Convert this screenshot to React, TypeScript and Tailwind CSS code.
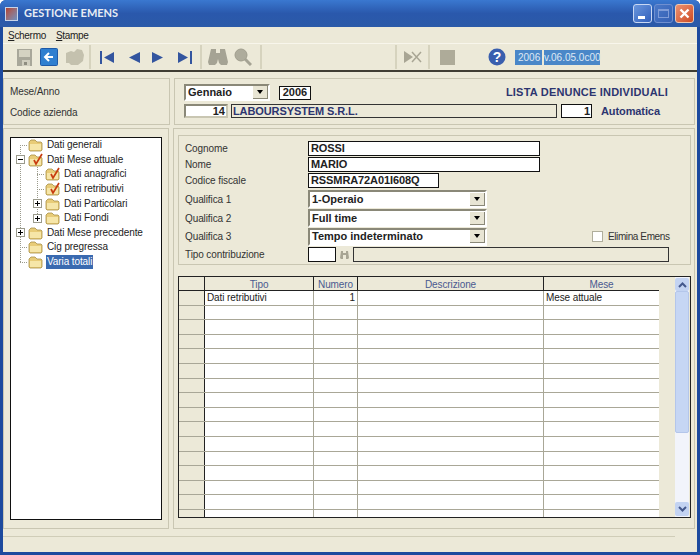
const FONT = "font-['Liberation_Sans',Arial,sans-serif]"

const columns = [
  { name: "Tipo", w: "w-[109px]" },
  { name: "Numero", w: "w-[44px]" },
  { name: "Descrizione", w: "w-[186px]" },
  { name: "Mese", w: "w-[115px]" },
]

const rows = Array.from({ length: 16 }, (_, i) => i)

function Separator({ className = "" }: { className?: string }) {
  return <div className={`h-[24px] w-[2px] shrink-0 bg-[#d6d3be] ${className}`} />
}

function TitleButtons() {
  return (
    <div className="flex items-center gap-[2px] pr-[1px]">
      <div className="relative h-[19px] w-[19px] rounded-[3px] border border-[#c8d8f4] bg-gradient-to-br from-[#6a96dc] to-[#3260bc]">
        <div className="absolute bottom-[3px] left-[4px] h-[3px] w-[7px] bg-white" />
      </div>
      <div className="flex h-[19px] w-[19px] items-center justify-center rounded-[3px] border border-[#6f8fd0] bg-gradient-to-br from-[#4a78c8] to-[#3560b4]">
        <div className="h-[9px] w-[11px] border border-t-2 border-[#7f9cd8]" />
      </div>
      <div className="flex h-[19px] w-[19px] items-center justify-center rounded-[3px] border border-[#f0c8b0] bg-gradient-to-br from-[#ec9070] to-[#cc4a20]">
        <svg width="11" height="11" viewBox="0 0 11 11">
          <path d="M1.500 1.500 9.500 9.500M9.500 1.500 1.500 9.500" stroke="#fff" strokeWidth="2.400" />
        </svg>
      </div>
    </div>
  )
}

function Toolbar() {
  return (
    <div className="flex h-[28px] items-center border-b-2 border-[#3f3d33] bg-[#ece9d8] pl-[11px]">
      <svg width="20" height="19" viewBox="0 0 20 19" className="shrink-0">
        <path d="M3 1h15v17H3z" fill="#a8a79a" />
        <path d="M5 2h11v7H5z" fill="#d4d2c2" />
        <path d="M8 12h8v6H8z" fill="#d0cebf" />
        <path d="M10 14h3v3h-3z" fill="#8e8d80" />
      </svg>
      <svg width="18" height="18" viewBox="0 0 18 18" className="ml-[6px] shrink-0">
        <rect width="17" height="17" x="0.500" y="0.500" rx="1" fill="#2f7fd0" stroke="#1f5aa8" />
        <path d="M13 9H6M9 5 5 9l4 4" stroke="#fff" strokeWidth="2" fill="none" />
      </svg>
      <svg width="20" height="18" viewBox="0 0 20 18" className="ml-[7px] shrink-0">
        <path d="M1 5 6 3l3 1 3-3 5 1 2 5-1 6-5 4H6l-2-2H1z" fill="#c4c1ae" />
      </svg>
      <Separator className="ml-[4px]" />
      <svg width="15" height="13" viewBox="0 0 15 13" className="ml-[9px] shrink-0">
        <path d="M0 0h2v13H0z" fill="#33559f" />
        <path d="M14 1v11L4 6.500z" fill="#33559f" />
      </svg>
      <svg width="11" height="11" viewBox="0 0 11 11" className="ml-[14px] shrink-0">
        <path d="M11 0v11L0 5.500z" fill="#33559f" />
      </svg>
      <svg width="11" height="11" viewBox="0 0 11 11" className="ml-[12px] shrink-0">
        <path d="M0 0v11l11-5.500z" fill="#33559f" />
      </svg>
      <svg width="15" height="13" viewBox="0 0 15 13" className="ml-[14px] shrink-0">
        <path d="M13 0h2v13h-2z" fill="#33559f" />
        <path d="M1 1v11l10-5.500z" fill="#33559f" />
      </svg>
      <Separator className="ml-[8px]" />
      <svg width="20" height="18" viewBox="0 0 20 18" className="ml-[6px] shrink-0">
        <path d="M3 1h5v4h4V1h5l3 13-1 3h-6l-2-2-1-4H10l-1 4-2 2H1l-1-3z" fill="#a5a394" />
      </svg>
      <svg width="18" height="18" viewBox="0 0 18 18" className="ml-[6px] shrink-0">
        <circle cx="7" cy="7" r="6" fill="#aeac9c" stroke="#a09e8e" />
        <path d="M11 11l6 6" stroke="#a5a394" strokeWidth="3" />
      </svg>
      <Separator className="ml-[8px]" />
      <Separator className="ml-[133px]" />
      <svg width="18" height="14" viewBox="0 0 18 14" className="ml-[7px] shrink-0">
        <path d="M0 1v12l9-6z" fill="#a8a594" />
        <path d="M8 2l9 10M17 2 8 12" stroke="#a8a594" strokeWidth="1.500" />
      </svg>
      <Separator className="ml-[6px]" />
      <div className="ml-[10px] h-[15px] w-[15px] shrink-0 bg-[#aeab99]" />
      <svg width="18" height="18" viewBox="0 0 18 18" className="ml-[33px] shrink-0">
        <circle cx="9" cy="9" r="8.500" fill="#3a5fae" />
        <text x="9" y="14" textAnchor="middle" fontSize="14" fontWeight="700" fill="#fff" fontFamily="Liberation Sans">?</text>
      </svg>
      <div className="ml-[9px] flex h-[15px] gap-[2px] text-[10px] leading-[15px] text-[#dfe8f4]">
        <span className="w-[27px] bg-[#4a87c8] pl-[3px]">2006</span>
        <span className="w-[56px] whitespace-nowrap bg-[#4a87c8]">v.06.05.0c00</span>
      </div>
    </div>
  )
}

function Folder({ check = false }: { check?: boolean }) {
  return (
    <svg width="16" height="14" viewBox="0 0 16 14" className="shrink-0">
      <path d="M1 4 3 2h4l2 2h4l1 1v7l-1 1H2l-1-1z" fill="#e8cc78" stroke="#a89048" strokeWidth="0.800" />
      <path d="M2 6h11v6H2z" fill="#f6e6a8" />
      {check && <path d="M6 7l2 4 6-10" stroke="#c83c10" strokeWidth="1.700" fill="none" />}
    </svg>
  )
}

function Expander({ sign }: { sign: "+" | "-" }) {
  return (
    <div className="relative h-[9px] w-[9px] shrink-0 border border-[#9a9a8c] bg-white">
      <div className="absolute left-[1px] top-[3px] h-[1px] w-[5px] bg-black" />
      {sign === "+" && <div className="absolute left-[3px] top-[1px] h-[5px] w-[1px] bg-black" />}
    </div>
  )
}

function TreeRow({ label, depth, check, sign, selected }: { label: string; depth: 0 | 1; check?: boolean; sign?: "+" | "-"; selected?: boolean }) {
  return (
    <div className={`relative flex h-[14.600px] items-center ${depth === 1 ? "pl-[22px]" : "pl-[5px]"}`}>
      <div className="flex w-[11px] shrink-0 items-center">
        {sign ? <Expander sign={sign} /> : <div className="ml-[4px] h-0 w-[7px] border-t border-dotted border-[#9a9a8c]" />}
      </div>
      <div className="ml-[1px]">
        <Folder check={check} />
      </div>
      <span className={`ml-[2px] px-[1px] leading-[14px] tracking-[-0.1px] ${selected ? "bg-[#3a6ab0] text-white" : "text-[#222]"}`}>{label}</span>
    </div>
  )
}

function Combo({ value, w, h }: { value: string; w: string; h: string }) {
  return (
    <div className={`flex items-center justify-between border-2 border-b-white border-r-white border-l-[#8a8878] border-t-[#8a8878] bg-white pl-[2px] ${w} ${h}`}>
      <span className="text-[11px] font-bold text-[#222]">{value}</span>
      <div className="flex h-[13px] w-[15px] items-center justify-center border-b border-r border-[#8a8878] bg-[#e8e5d4]">
        <div className="h-0 w-0 border-x-[3.500px] border-t-[4px] border-x-transparent border-t-black" />
      </div>
    </div>
  )
}

function TextBox({ value, w }: { value: string; w: string }) {
  return (
    <div className={`flex h-[15px] items-center border border-[#111] bg-white pl-[2px] text-[11px] font-bold leading-none tracking-[-0.1px] text-[#222] ${w}`}>
      {value}
    </div>
  )
}

function FormLabel({ children }: { children: string }) {
  return <span className="w-[123px] shrink-0 tracking-[-0.1px] text-[#333]">{children}</span>
}

export default function App() {
  return (
    <div className={`flex h-[555px] w-[700px] flex-col overflow-hidden rounded-t-[6px] bg-[#1d4a9e] text-[10px] ${FONT}`}>
      <div className="flex h-[27px] items-center justify-between bg-gradient-to-b from-[#3a78d0] via-[#2a58ac] to-[#2b5aa8] pl-[5px] pr-[5px]">
        <div className="flex items-center gap-[6px]">
          <div className="h-[14px] w-[13px] border border-[#c8d4e8] bg-gradient-to-br from-[#b04030] to-[#6a90c0]" />
          <span className="font-['Lato',sans-serif] text-[11px] font-bold text-[#e8edf4]">GESTIONE EMENS</span>
        </div>
        <TitleButtons />
      </div>

      <div className="mx-[3px] mb-[3px] flex flex-1 flex-col bg-[#ece9d8]">
        <div className="flex h-[17px] items-center gap-[10px] border-b border-[#f8f6ec] pl-[5px] tracking-[-0.3px] text-[#222]">
          <span>
            <span className="underline">S</span>chermo
          </span>
          <span>
            <span className="underline">S</span>tampe
          </span>
        </div>
        <Toolbar />

        <div className="mr-[2px] mt-[6px] flex h-[47px] gap-[4px]">
          <div className="flex w-[167px] flex-col justify-center gap-[6px] border border-[#c9c6b2] pl-[6px] tracking-[-0.1px] text-[#333]">
            <span>Mese/Anno</span>
            <span>Codice azienda</span>
          </div>
          <div className="flex flex-1 flex-col gap-[2px] border border-[#c9c6b2] pl-[9px] pt-[5px]">
            <div className="flex items-center">
              <Combo value="Gennaio" w="w-[86px]" h="h-[17px]" />
              <div className="ml-[9px] flex h-[14px] w-[32px] items-center justify-center border border-[#111] bg-white text-[11px] font-bold text-[#222]">2006</div>
              <span className="ml-auto mr-[26px] text-[11px] font-bold tracking-[0.2px] text-[#2c3570]">LISTA DENUNCE INDIVIDUALI</span>
            </div>
            <div className="flex items-center">
              <div className="flex h-[14px] w-[44px] items-center justify-end border-2 border-b-[#c9c6b2] border-r-[#c9c6b2] border-l-[#8a8878] border-t-[#8a8878] bg-white pr-[1px] text-[11px] font-bold text-[#222]">14</div>
              <div className="ml-[3px] flex h-[14px] w-[326px] items-center border border-[#333] pl-[1px] text-[11px] font-bold tracking-[-0.1px] text-[#2c3570]">LABOURSYSTEM S.R.L.</div>
              <div className="ml-[4px] flex h-[14px] w-[31px] items-center justify-end border border-[#111] bg-white pr-[1px] text-[11px] font-bold text-[#222]">1</div>
              <span className="ml-[9px] text-[11px] font-bold tracking-[-0.1px] text-[#2c3570]">Automatica</span>
            </div>
          </div>
        </div>

        <div className="mr-[2px] mt-[3px] flex h-[401px] gap-[4px]">
          <div className="w-[167px] border border-[#c9c6b2] px-[6px] pb-[8px] pt-[8px]">
            <div className="relative h-full border border-[#111] bg-white">
              <div className="absolute left-[9px] top-[7px] h-[117px] border-l border-dotted border-[#9a9a8c]" />
              <div className="absolute left-[26px] top-[22px] h-[58px] border-l border-dotted border-[#9a9a8c]" />
              <TreeRow depth={0} label="Dati generali" />
              <TreeRow depth={0} label="Dati Mese attuale" check sign="-" />
              <TreeRow depth={1} label="Dati anagrafici" check />
              <TreeRow depth={1} label="Dati retributivi" check />
              <TreeRow depth={1} label="Dati Particolari" sign="+" />
              <TreeRow depth={1} label="Dati Fondi" sign="+" />
              <TreeRow depth={0} label="Dati Mese precedente" sign="+" />
              <TreeRow depth={0} label="Cig pregressa" />
              <TreeRow depth={0} label="Varia totali" selected />
            </div>
          </div>

          <div className="flex flex-1 flex-col border border-[#c9c6b2] pl-[4px] pr-[3px] pt-[6px]">
            <div className="h-[130px] border border-[#c9c6b2] pl-[6px] pt-[4px] text-[#333]">
              <div className="flex h-[16px] items-center">
                <FormLabel>Cognome</FormLabel>
                <TextBox value="ROSSI" w="w-[232px]" />
              </div>
              <div className="flex h-[16px] items-center">
                <FormLabel>Nome</FormLabel>
                <TextBox value="MARIO" w="w-[232px]" />
              </div>
              <div className="flex h-[17px] items-center">
                <FormLabel>Codice fiscale</FormLabel>
                <TextBox value="RSSMRA72A01I608Q" w="w-[131px]" />
              </div>
              <div className="flex h-[20px] items-center">
                <FormLabel>Qualifica 1</FormLabel>
                <Combo value="1-Operaio" w="w-[179px]" h="h-[18px]" />
              </div>
              <div className="flex h-[18px] items-center">
                <FormLabel>Qualifica 2</FormLabel>
                <Combo value="Full time" w="w-[179px]" h="h-[18px]" />
              </div>
              <div className="flex h-[19px] items-center">
                <FormLabel>Qualifica 3</FormLabel>
                <Combo value="Tempo indeterminato" w="w-[179px]" h="h-[18px]" />
                <div className="ml-[105px] h-[11px] w-[11px] border border-[#b0ae9c] bg-white" />
                <span className="ml-[5px] tracking-[-0.4px] text-[#333]">Elimina Emens</span>
              </div>
              <div className="flex h-[17px] items-center">
                <FormLabel>Tipo contribuzione</FormLabel>
                <div className="h-[15px] w-[28px] border border-[#111] bg-white" />
                <svg width="9" height="8" viewBox="0 0 9 8" className="ml-[4px] shrink-0">
                  <path d="M1 0h2v2h3V0h2l1 7-1 1H6V4H3v4H1L0 7z" fill="#a8a594" />
                </svg>
                <div className="ml-[4px] h-[15px] w-[316px] border border-[#333]" />
              </div>
            </div>

            <div className="mt-[11px] flex h-[242px] border border-[#222]">
              <div className="flex w-[480px] flex-col overflow-hidden">
                <div className="flex h-[14px] shrink-0 border-b border-[#222]">
                  <div className="w-[26px] shrink-0 border-r border-[#222]" />
                  {columns.map((c) => (
                    <div key={c.name} className={`${c.w} shrink-0 border-r border-[#222] text-center leading-[15px] tracking-[-0.1px] text-[#4a5a90] last:border-r-0`}>
                      {c.name}
                    </div>
                  ))}
                </div>
                {rows.map((r) => (
                  <div key={r} className="flex h-[14.600px] shrink-0 overflow-hidden border-b border-[#a9a797]">
                    <div className="w-[26px] shrink-0 border-r border-[#222]" />
                    <div className="w-[109px] shrink-0 border-r border-[#a9a797] bg-white pl-[2px] leading-[14px] tracking-[-0.1px] text-[#222]">{r === 0 && "Dati retributivi"}</div>
                    <div className="w-[44px] shrink-0 border-r border-[#a9a797] bg-white pr-[2px] text-right leading-[14px] text-[#222]">{r === 0 && "1"}</div>
                    <div className="w-[186px] shrink-0 border-r border-[#a9a797] bg-white" />
                    <div className="w-[115px] shrink-0 bg-white pl-[2px] leading-[14px] tracking-[-0.1px] text-[#222]">{r === 0 && "Mese attuale"}</div>
                  </div>
                ))}
              </div>
              <div className="w-[16px]" />
              <div className="flex w-[14px] flex-col bg-[#f2f4fb] py-[1px]">
                <div className="flex h-[13px] items-center justify-center rounded-[2px] bg-[#c3d3f2]">
                  <svg width="9" height="6" viewBox="0 0 9 6">
                    <path d="M1 5l3.500-3.500L8 5" stroke="#44588c" strokeWidth="2" fill="none" />
                  </svg>
                </div>
                <div className="h-[142px] rounded-[2px] border border-[#b4c6ea] bg-[#c6d6f4]" />
                <div className="flex-1" />
                <div className="flex h-[14px] items-center justify-center rounded-[2px] bg-[#c3d3f2]">
                  <svg width="9" height="6" viewBox="0 0 9 6">
                    <path d="M1 1l3.500 3.500L8 1" stroke="#44588c" strokeWidth="2" fill="none" />
                  </svg>
                </div>
              </div>
              <div className="w-[1px]" />
            </div>
          </div>
        </div>

        <div className="flex flex-1 flex-col">
          <div className="mr-[22px] mt-[7px] flex-1 border-t border-[#d0cdb8]" />
        </div>
      </div>
    </div>
  )
}
